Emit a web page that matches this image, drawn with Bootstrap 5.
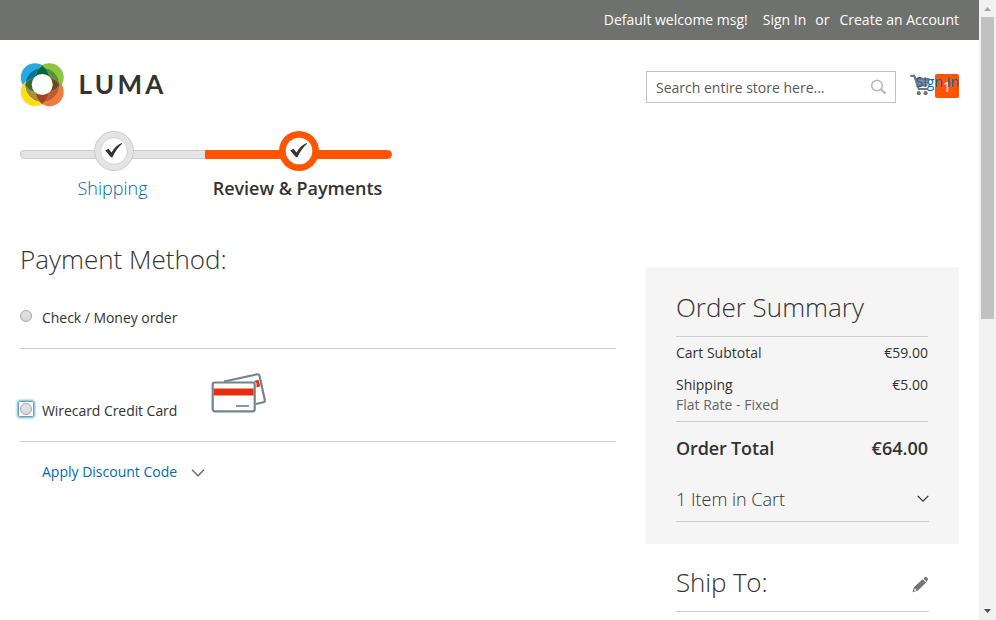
<!DOCTYPE html>
<html lang="en">
<head>
<meta charset="utf-8">
<meta name="viewport" content="width=device-width, initial-scale=1">
<title>Checkout</title>
<link href="https://cdn.jsdelivr.net/npm/bootstrap@5.3.0/dist/css/bootstrap.min.css" rel="stylesheet">
<style>
body{font-family:"Open Sans","Noto Sans",sans-serif;font-size:14px;line-height:20px;color:#333;height:620px;overflow:hidden}
a{color:#006bb4;text-decoration:none}
.page{width:979px;height:620px}
.panel-bar{height:40px;background:#6e716e;padding-right:20px}
.panel-bar a{color:#fff}
.sign-in{margin-left:15px}
.or-word{margin:0 10px 0 9px}
.masthead{height:91px;padding:0 20px}
.brand-link{margin-top:23px}
.wordmark{font-family:Lato,sans-serif;font-weight:700;font-size:26px;line-height:30px;letter-spacing:3.3px;color:#333;margin:-2px 0 0 13.500px}
.search-box{width:250px;height:32px;border:1px solid #c2c2c2;margin-top:31px;padding:1px 8px 0 9px;color:#575757}
.mini-cart{width:49px;height:24px;margin:34px 0 0 14px}
.count{width:24px;height:24px;background:#ff5501;border-radius:2px;line-height:25px}
.cart-label{right:0;top:-2px;white-space:nowrap}
.steps{padding-left:20px;height:105px}
.step-item{width:187px;font-size:18px;line-height:24px}
.step-item:first-child{width:185px}
.step-track{height:40px}
.step-line{height:9px;margin-top:6px;background:#e4e4e4;border:1px solid #ccc}
.first-line{border-radius:6px 0 0 6px;border-right:0}
.active-line{background:#ff5501;border-color:#ff5501;border-radius:0 6px 6px 0}
.step-dot{left:74px;top:0;width:40px;height:40px}
.step-label{margin-top:5px}
.active-label{letter-spacing:-.04px;padding-right:2px}
.fw-300{font-weight:300}
.fw-600{font-weight:600}
.content-cols{padding:0 20px;gap:30px}
.main-col{width:596px}
.side-col{width:313px;margin-top:31px}
.title-lg{font-size:26px;line-height:36px;font-weight:300;margin:0}
.pay-title{padding:5px 0 11px}
.rule{border-bottom:1px solid #ccc}
.radio-dot{width:12px;height:12px;border-radius:50%;border:1px solid #a5a5a5;background:linear-gradient(#e2e2e2,#d9d9d9)}
.method-one{height:61px;padding-top:20px}
.method-one .radio-dot{margin:2px 10px 0 0}
.method-one span+span{letter-spacing:-.04px}
.method-two{height:93px}
.radio-focus{width:14px;height:14px;margin:53px 9px 0 -1px;box-shadow:0 0 3px 1px #00699d;background:#fff}
.method-name{margin-top:52px;letter-spacing:-.06px}
.card-art{margin:24px 0 0 34px}
.discount{padding:20px 0 0 22px}
.discount svg{margin:2px 0 0 14px}
.summary{height:277px;background:#f5f5f5;padding:22px 30px 0}
.totals{width:252px}
.sum-title{height:48px}
.sum-row{padding-top:6px}
.ship-row{padding-top:12px}
.muted-note{color:#666;height:27px}
.total-row{font-size:18px;line-height:24px;padding-top:14px}
.total-row span:first-child{letter-spacing:-.15px}
.items-row{font-size:18px;line-height:24px;margin-top:27px;height:35px}
.items-row svg{margin-top:8px}
.ship-to{padding:0 30px}
.ship-head{height:68px;padding-top:20px}
.ship-head .title-lg{letter-spacing:-.15px}
.ship-head svg{margin-top:12px}
.scroll-strip{width:17px;height:620px;background:#f1f1f1}
.scroll-thumb{width:13px;height:302px;background:#c1c1c1;margin:0 auto}
</style>
<script src="https://cdn.jsdelivr.net/npm/bootstrap@5.3.0/dist/js/bootstrap.bundle.min.js"></script>
</head>
<body class="d-flex bg-white">
<div class="page flex-shrink-0 overflow-hidden">
  <div class="panel-bar d-flex justify-content-end align-items-center text-white">
    <span>Default welcome msg!</span>
    <a href="#" class="sign-in">Sign In</a>
    <span class="or-word">or</span>
    <a href="#">Create an Account</a>
  </div>
  <header class="masthead d-flex align-items-start">
    <a href="#" class="brand-link d-flex align-items-center">
      <svg width="45" height="44" viewBox="0 0 45 44">
        <circle cx="15" cy="14.500" r="14.200" fill="#27a9e1"/>
        <circle cx="29.500" cy="14.500" r="14.200" fill="#8cc63f"/>
        <circle cx="15" cy="29" r="14.200" fill="#ffde17"/>
        <circle cx="29.500" cy="29" r="14.200" fill="#f37a3d"/>
        <circle cx="22.200" cy="21.800" r="16.600" fill="#0b7399"/>
        <path d="M22.200 21.800V5.200A16.600 16.600 0 0 1 38.800 21.800z" fill="#5d8e3a"/>
        <path d="M22.200 21.800V38.400A16.600 16.600 0 0 1 5.600 21.800z" fill="#a99034"/>
        <path d="M22.200 21.800V38.400A16.600 16.600 0 0 0 38.800 21.800z" fill="#c05a2b"/>
        <path d="M22.200 2.500Q29 8 29 14.500L22.200 21 15.500 14.500Q15.500 8 22.200 2.500z" fill="#006838" stroke="#5aa68a" stroke-width=".4"/>
        <path d="M5 21.800Q9 15 15 15L22 21.800 15 28.500Q9 28.500 5 21.800z" fill="#38693b" stroke="#9bb579" stroke-width=".4"/>
        <path d="M39.500 21.800Q35.500 15 29.500 15L22 21.800 29.500 28.500Q35.500 28.500 39.500 21.800z" fill="#69491f" stroke="#c8915f" stroke-width=".4"/>
        <path d="M22.200 41Q29 35.500 29 29L22.200 22 15.500 29Q15.500 35.500 22.200 41z" fill="#a6431f" stroke="#e0a070" stroke-width=".4"/>
        <circle cx="22.200" cy="21.500" r="10.500" fill="#fff"/>
      </svg>
      <span class="wordmark">LUMA</span>
    </a>
    <div class="search-box d-flex align-items-center justify-content-between ms-auto">
      <span>Search entire store here...</span>
      <svg width="17" height="17" viewBox="0 0 17 17" fill="none" stroke="#b8b8b8"><circle cx="7" cy="6.500" r="5.300" stroke-width="1.500"/><path d="M11 10.500l4.500 4.200" stroke-width="2.300"/></svg>
    </div>
    <div class="mini-cart d-flex justify-content-between position-relative">
      <svg width="22" height="22" viewBox="0 0 22 22" fill="#757575"><path d="M.3.800h4.500L6.500 4h13L17 12.500H9l.5 1.500h8v2H8L3.500 3H.3z"/><path d="M7.500 7h11M8.500 9.700h9" stroke="#fff" stroke-width=".35"/><circle cx="8.800" cy="19.200" r="2.100"/><circle cx="15.600" cy="19.200" r="2.100"/></svg>
      <span class="count text-white text-center">1</span>
      <a href="#" class="cart-label position-absolute">Sign In</a>
    </div>
  </header>

  <div class="steps d-flex">
    <div class="step-item text-center">
      <div class="step-track d-flex align-items-center position-relative">
        <div class="step-line first-line w-100"></div>
        <svg class="step-dot position-absolute" viewBox="0 0 40 40"><circle cx="20" cy="20" r="19.500" fill="#e4e4e4" stroke="#ccc"/><circle cx="20" cy="20" r="13.300" fill="#fff" stroke="#ccc" stroke-width=".8"/><path d="M11.200 19.500l3.300-1.800 3 3.800C20 17 23 14 27.600 12l.5.800C24 16.500 21 20.500 18.500 26.200H17z" fill="#333"/></svg>
      </div>
      <div class="step-label fw-300"><a href="#">Shipping</a></div>
    </div>
    <div class="step-item text-center">
      <div class="step-track d-flex align-items-center position-relative">
        <div class="step-line active-line w-100"></div>
        <svg class="step-dot position-absolute" viewBox="0 0 40 40"><circle cx="20" cy="20" r="20" fill="#ff5501"/><circle cx="20" cy="20" r="13.300" fill="#fff"/><path d="M11.200 19.500l3.300-1.800 3 3.800C20 17 23 14 27.600 12l.5.800C24 16.500 21 20.500 18.500 26.200H17z" fill="#333"/></svg>
      </div>
      <div class="step-label active-label fw-600 text-nowrap">Review &amp; Payments</div>
    </div>
  </div>

  <div class="content-cols d-flex align-items-start">
    <main class="main-col">
      <h2 class="title-lg pay-title">Payment Method:</h2>
      <div class="method-one rule d-flex align-items-start">
        <span class="radio-dot"></span><span>Check / Money order</span>
      </div>
      <div class="method-two rule d-flex align-items-start">
        <span class="radio-focus d-flex align-items-center justify-content-center"><span class="radio-dot"></span></span>
        <span class="method-name">Wirecard Credit Card</span>
        <svg class="card-art" width="56" height="42" viewBox="0 0 56 42" fill="none" stroke="#72858e" stroke-width="2.200">
          <path d="M13 8.500L46 1.300Q48 1 48.500 2.700L53.800 27Q54.100 29 52.300 29.300L45 31"/>
          <path d="M42.800 8L47.500 6.700l1.700 6.500-3.700 1.300V10z" fill="#e62e12" stroke="none"/>
          <rect x="1.700" y="9.500" width="42" height="28.800" rx="2" fill="#fff"/>
          <path d="M2.800 15.500h39.800v7H2.800z" fill="#e62e12" stroke="none"/>
          <path d="M25 33h13" stroke-width="1.700"/>
        </svg>
      </div>
      <div class="discount d-flex align-items-center">
        <a href="#">Apply Discount Code</a>
        <svg width="14" height="8" viewBox="0 0 14 8" fill="none" stroke="#666" stroke-width="1.400"><path d="M1 .8l6 6 6-6"/></svg>
      </div>
    </main>

    <aside class="side-col">
      <section class="summary">
        <div class="totals">
          <h2 class="title-lg sum-title rule">Order Summary</h2>
          <div class="sum-row d-flex justify-content-between"><span>Cart Subtotal</span><span>€59.00</span></div>
          <div class="ship-row d-flex justify-content-between"><span>Shipping</span><span>€5.00</span></div>
          <div class="muted-note rule">Flat Rate - Fixed</div>
          <div class="total-row d-flex justify-content-between fw-600"><span>Order Total</span><span>€64.00</span></div>
        </div>
        <div class="items-row rule d-flex justify-content-between fw-300">
          <span>1 Item in Cart</span>
          <svg width="12" height="8" viewBox="0 0 12 8" fill="none" stroke="#333" stroke-width="1.300"><path d="M.7.900l5.300 5.300 5.300-5.300"/></svg>
        </div>
      </section>
      <section class="ship-to">
        <div class="ship-head rule d-flex justify-content-between">
          <h2 class="title-lg">Ship To:</h2>
          <svg width="17" height="17" viewBox="0 0 17 17" fill="#757575"><path d="M.5 16.300L2 11 10.700 3.200l3.300 3.300L5.700 14.700zM11.500 2.500L13 1.100q1-.6 1.700.1l1 1q.7.700.1 1.600L14.700 5.700z"/><path d="M2.700 12.300l2 2-2.500.9z" fill="#fff"/></svg>
        </div>
      </section>
    </aside>
  </div>
</div>
<div class="scroll-strip flex-shrink-0 d-flex flex-column">
  <svg width="17" height="17" viewBox="0 0 17 17"><path d="M5 11h7L8.500 7z" fill="#a3a3a3"/></svg>
  <div class="scroll-thumb"></div>
  <svg class="mt-auto" width="17" height="17" viewBox="0 0 17 17"><path d="M5 6h7l-3.500 4z" fill="#505050"/></svg>
</div>
</body>
</html>
